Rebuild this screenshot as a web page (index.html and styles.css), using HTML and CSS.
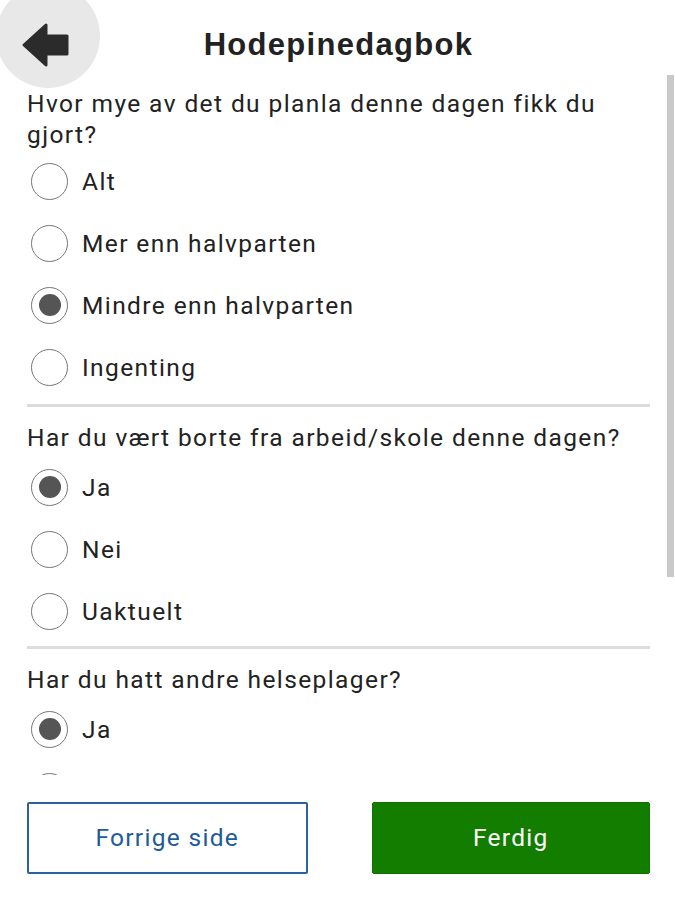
FILE: index.html
```html
<!DOCTYPE html>
<html lang="no">
<head>
<meta charset="utf-8">
<title>Hodepinedagbok</title>
<link rel="stylesheet" href="styles.css">
</head>
<body>
<div class="app">
  <header class="topbar">
    <button class="back" aria-label="Tilbake">
      <svg class="back-icon" width="52" height="48" viewBox="0 0 52 48">
        <path d="M3 23 L25 3 L25 14 L46 14 L46 32 L25 32 L25 43 Z" fill="#2b2b2b" stroke="#2b2b2b" stroke-width="3" stroke-linejoin="round"/>
      </svg>
    </button>
    <h1 class="title">Hodepinedagbok</h1>
  </header>
  <main class="scroll">
    <section class="question first">
      <p class="q-text">Hvor mye av det du planla denne dagen fikk du gjort?</p>
      <div class="option"><span class="radio"></span><span class="label">Alt</span></div>
      <div class="option"><span class="radio"></span><span class="label">Mer enn halvparten</span></div>
      <div class="option"><span class="radio checked"></span><span class="label">Mindre enn halvparten</span></div>
      <div class="option"><span class="radio"></span><span class="label">Ingenting</span></div>
    </section>
    <section class="question">
      <p class="q-text">Har du vært borte fra arbeid/skole denne dagen?</p>
      <div class="option"><span class="radio checked"></span><span class="label">Ja</span></div>
      <div class="option"><span class="radio"></span><span class="label">Nei</span></div>
      <div class="option"><span class="radio"></span><span class="label">Uaktuelt</span></div>
    </section>
    <section class="question">
      <p class="q-text">Har du hatt andre helseplager?</p>
      <div class="option"><span class="radio checked"></span><span class="label">Ja</span></div>
      <div class="option"><span class="radio"></span><span class="label">Nei</span></div>
    </section>
  </main>
  <div class="scrollbar" aria-hidden="true"></div>
  <footer class="actions">
    <button class="btn btn-secondary">Forrige side</button>
    <button class="btn btn-primary">Ferdig</button>
  </footer>
</div>
</body>
</html>
```
FILE: styles.css
```css
* { box-sizing: border-box; }
html, body { margin: 0; padding: 0; background: #fff; }
body {
  font-family: Roboto, "Liberation Sans", Arial, sans-serif;
  color: #222;
  overflow: hidden;
}
.app {
  width: 675px;
  height: 900px;
  display: flex;
  flex-direction: column;
  position: relative;
}
.topbar {
  height: 75px;
  flex: none;
  display: flex;
  align-items: center;
  justify-content: center;
  position: relative;
  z-index: 2;
}
.back {
  position: absolute;
  left: -4px;
  top: -16px;
  width: 104px;
  height: 104px;
  border-radius: 50%;
  background: #e8e8e8;
  border: none;
  padding: 0;
  display: flex;
  align-items: center;
  justify-content: center;
}
.back-icon { position: relative; left: -1px; top: 10px; }
.title {
  margin: 0;
  font-family: "Liberation Sans", Arial, sans-serif;
  font-weight: bold;
  font-size: 31px;
  letter-spacing: 1.3px;
  color: #222;
  padding-top: 14px;
  padding-left: 2px;
}
.scroll {
  flex: 1;
  overflow: hidden;
  padding: 13px 25px 0 27px;
}
.scrollbar {
  position: absolute;
  right: 1px;
  top: 75px;
  width: 7px;
  height: 502px;
  background: #c9c9c9;
}
.question { border-top: 3px solid #dcdcdc; padding-top: 15px; margin-top: 4px; }
.question.first { border-top: none; padding-top: 0; margin-top: 0; padding-bottom: 2px; }
.q-text {
  margin: 0 0 3px;
  font-size: 24.5px;
  line-height: 31px;
  letter-spacing: 1.4px;
}
.question.first .q-text { margin-bottom: 0; }
.option {
  height: 62px;
  display: flex;
  align-items: center;
  gap: 14px;
}
.radio {
  width: 37px;
  height: 37px;
  flex: none;
  border-radius: 50%;
  border: 1.5px solid #777;
  display: flex;
  align-items: center;
  justify-content: center;
  margin-left: 4px;
}
.radio.checked::after {
  content: "";
  width: 22px;
  height: 22px;
  border-radius: 50%;
  background: #555;
}
.label { font-size: 24.5px; letter-spacing: 1.4px; }
.actions {
  height: 125px;
  flex: none;
  display: flex;
  align-items: center;
  gap: 64px;
  padding: 0 25px 0 27px;
  background: #fff;
}
.btn {
  flex: 1;
  height: 72px;
  font-family: Roboto, "Liberation Sans", Arial, sans-serif;
  font-size: 24.5px;
  letter-spacing: 1.3px;
  border-radius: 2px;
}
.btn-secondary {
  background: #fff;
  color: #1f5b97;
  border: 2px solid #2a62a0;
}
.btn-primary {
  background: #137d00;
  color: #fff;
  border: 1px solid #107000;
}
```
